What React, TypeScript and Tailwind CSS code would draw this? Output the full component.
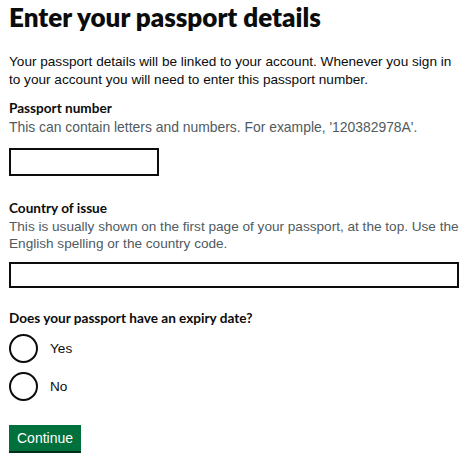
export default function App() {
  return (
    <div className="w-[475px] h-[459px] bg-white pl-[9px] pr-[12px] text-[#0b0c0c] font-['Liberation_Sans',Arial,sans-serif]">
      <h1 className="font-['Lato',sans-serif] font-extrabold text-[26px] leading-[34px]">
        Enter your passport details
      </h1>

      <p className="mt-[19px] text-[13.6px] leading-[18px]">
        Your passport details will be linked to your account. Whenever you sign in to your account you will need to enter this passport number.
      </p>

      <div className="mt-[10px]">
        <label className="block font-['Lato',sans-serif] font-bold text-[13.6px] leading-[19px]">Passport number</label>
        <div className="text-[13.9px] leading-[18px] text-[#505a5f]">
          This can contain letters and numbers. For example, '120382978A'.
        </div>
        <input
          type="text"
          className="mt-[12px] block w-[150px] h-[28px] border-2 border-[#0b0c0c] bg-white outline-none"
        />
      </div>

      <div className="mt-[22px]">
        <label className="block font-['Lato',sans-serif] font-bold text-[13.6px] leading-[20px]">Country of issue</label>
        <div className="text-[13.6px] leading-[17px] text-[#505a5f]">
          This is usually shown on the first page of your passport, at the top. Use the English spelling or the country code.
        </div>
        <input
          type="text"
          className="mt-[10px] block w-[450px] h-[26px] border-2 border-[#0b0c0c] bg-white outline-none"
        />
      </div>

      <fieldset className="mt-[21px]">
        <legend className="font-['Lato',sans-serif] font-bold text-[13.6px] leading-[18px]">
          Does your passport have an expiry date?
        </legend>
        <div className="mt-[7px] flex flex-col gap-[9px]">
          {["Yes", "No"].map((opt) => (
            <label key={opt} className="flex items-center gap-[12px]">
              <span className="w-[29px] h-[29px] rounded-full border-2 border-[#0b0c0c] bg-white" />
              <span className="text-[13.6px] leading-[18px]">{opt}</span>
            </label>
          ))}
        </div>
      </fieldset>

      <button className="mt-[24px] px-[8px] h-[26px] bg-[#00703c] text-white text-[14px] leading-[18px] shadow-[0_2px_0_#002d18]">
        Continue
      </button>
    </div>
  );
}
